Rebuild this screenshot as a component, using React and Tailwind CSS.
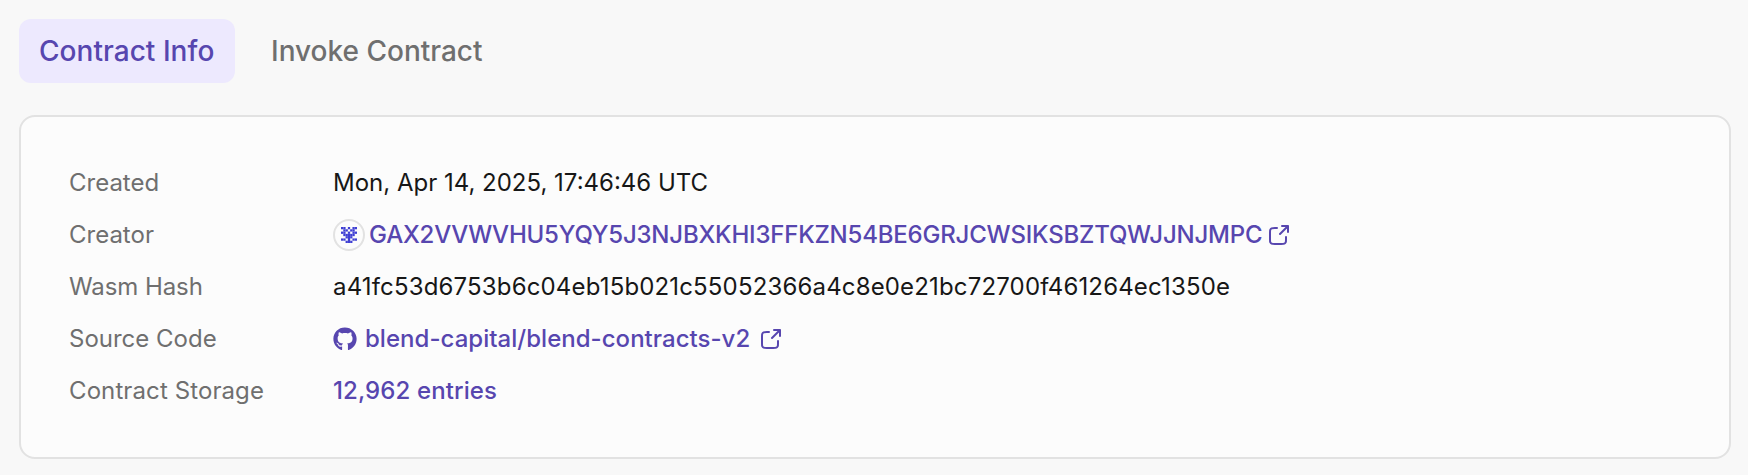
import { FaGithub } from "react-icons/fa";

const LABEL = "w-[264px] shrink-0 text-[#6f6f6f]";

const ExternalIcon = () => (
  <svg width="24" height="24" viewBox="0 0 24 24" fill="none" stroke="currentColor" strokeWidth="2" strokeLinecap="round" strokeLinejoin="round">
    <path d="M21 9V3h-6M21 3l-8 8M10 5H7.8c-1.68 0-2.52 0-3.162.327a3 3 0 0 0-1.311 1.311C3 7.28 3 8.12 3 9.8v6.4c0 1.68 0 2.52.327 3.162a3 3 0 0 0 1.311 1.311C5.28 21 6.12 21 7.8 21h6.4c1.68 0 2.52 0 3.162-.327a3 3 0 0 0 1.311-1.311C19 18.72 19 17.88 19 16.2V14" />
  </svg>
);

const CELLS = ["1101011", "0110110", "1101011", "0111110", "0011100", "1101011", "0011100"];

const Identicon = () => (
  <svg className="mr-1" width="32" height="32" viewBox="0 0 32 32">
    <circle cx="16" cy="16" r="15" fill="#fcfcfc" stroke="#e2e2e2" strokeWidth="2" />
    {CELLS.flatMap((row, y) =>
      [...row].map((cell, x) => cell === "1" && (
        <rect key={x + "-" + y} x={8 + x * 2.286} y={8 + y * 2.286} width="2.286" height="2.286" fill="#3f3fd3" />
      ))
    )}
    <path d="M15 15h2v9h-2z" fill="#3f3fd3" />
  </svg>
);

const Row = ({ label, children }) => (
  <div className="flex h-9">
    <div className={LABEL}>{label}</div>
    {children}
  </div>
);

export default function App() {
  return (
    <div className="h-[475px] bg-[#f8f8f8] px-[19px] pt-[19px] font-['Inter',sans-serif]">
      <div className="flex gap-4 text-[28px] font-medium leading-[40px]">
        <div className="h-16 w-[216px] whitespace-nowrap rounded-xl bg-[#ede9fe] px-5 py-3 tracking-[0.04px] text-[#5746af]">Contract Info</div>
        <div className="h-16 px-5 py-3 text-[#6f6f6f]">Invoke Contract</div>
      </div>
      <div className="mt-8 h-[344px] w-[1712px] rounded-2xl border-2 border-[#e2e2e2] bg-[#fcfcfc] p-12 text-[24px] leading-[36px] text-[#171717]">
        <div className="flex flex-col gap-4">
          <Row label="Created">Mon, Apr 14, 2025, 17:46:46 UTC</Row>
          <Row label="Creator">
            <div className="flex items-center font-medium text-[#5746af]">
              <Identicon />
              <span className="tracking-[-0.2px]">GAX2VVWVHU5YQY5J3NJBXKHI3FFKZN54BE6GRJCWSIKSBZTQWJJNJMPC</span>
              <span className="ml-[5px]"><ExternalIcon /></span>
            </div>
          </Row>
          <Row label={<span className="tracking-[-0.08px]">Wasm Hash</span>}>
            <span className="tracking-[0.157px]">a41fc53d6753b6c04eb15b021c55052366a4c8e0e21bc72700f461264ec1350e</span>
          </Row>
          <Row label="Source Code">
            <div className="flex items-center font-medium text-[#5746af]">
              <FaGithub className="mr-2 size-6" />
              <span className="tracking-[0.03px]">blend-capital/blend-contracts-v2</span>
              <span className="ml-[9px]"><ExternalIcon /></span>
            </div>
          </Row>
          <Row label={<span className="tracking-[0.1px]">Contract Storage</span>}>
            <div className="font-medium tracking-[0.1px] text-[#5746af]">12,962 entries</div>
          </Row>
        </div>
      </div>
    </div>
  );
}
